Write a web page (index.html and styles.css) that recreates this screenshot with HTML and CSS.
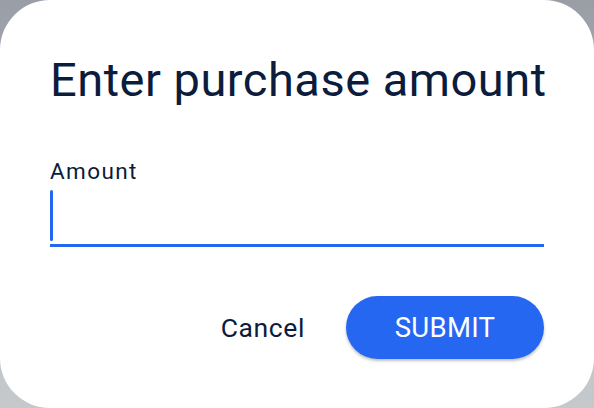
FILE: index.html
```html
<!DOCTYPE html>
<html>
<head>
<meta charset="utf-8">
<link rel="stylesheet" href="styles.css">
</head>
<body>
<div class="dialog">
  <h1 class="title">Enter purchase amount</h1>
  <div class="field">
    <label class="label">Amount</label>
    <div class="input"><span class="caret"></span></div>
  </div>
  <div class="actions">
    <button class="btn-text">Cancel</button>
    <button class="btn-primary">SUBMIT</button>
  </div>
</div>
</body>
</html>
```
FILE: styles.css
```css
html, body {
  margin: 0;
  padding: 0;
  width: 594px;
  height: 408px;
  overflow: hidden;
}
body {
  background: linear-gradient(180deg, #989da6 0%, #b4b8be 45%, #c6c9cc 100%);
  font-family: Roboto, "Noto Sans", sans-serif;
}
.dialog {
  box-sizing: border-box;
  width: 594px;
  height: 408px;
  background: #ffffff;
  border-radius: 50px;
  padding: 0 50px;
  display: flex;
  flex-direction: column;
  color: #0b1c3d;
}
.title {
  margin: 0;
  padding-top: 54px;
  font-size: 47px;
  font-weight: 400;
  line-height: 52px;
  letter-spacing: 0.5px;
  white-space: nowrap;
}
.field {
  margin-top: 52px;
  display: flex;
  flex-direction: column;
}
.label {
  font-size: 22.5px;
  line-height: 26px;
  letter-spacing: 1.4px;
}
.input {
  box-sizing: border-box;
  height: 57px;
  border-bottom: 3px solid #2667ef;
  display: flex;
  align-items: stretch;
  margin-top: 6px;
}
.caret {
  width: 3px;
  background: #2667ef;
  border-radius: 2px;
  margin-bottom: 3px;
}
.actions {
  margin-top: 49px;
  display: flex;
  justify-content: flex-end;
  align-items: center;
  gap: 41px;
}
.btn-text {
  background: none;
  border: 0;
  padding: 0;
  font-family: Roboto, sans-serif;
  font-size: 26.5px;
  letter-spacing: 0.6px;
  color: #0b1c3d;
}
.btn-primary {
  width: 198px;
  height: 63px;
  border: 0;
  border-radius: 32px;
  background: #2667f2;
  color: #ffffff;
  font-family: Roboto, sans-serif;
  font-size: 27.5px;
  letter-spacing: 0.3px;
  box-shadow: 0 2px 3px rgba(0,0,0,0.25);
}
```
